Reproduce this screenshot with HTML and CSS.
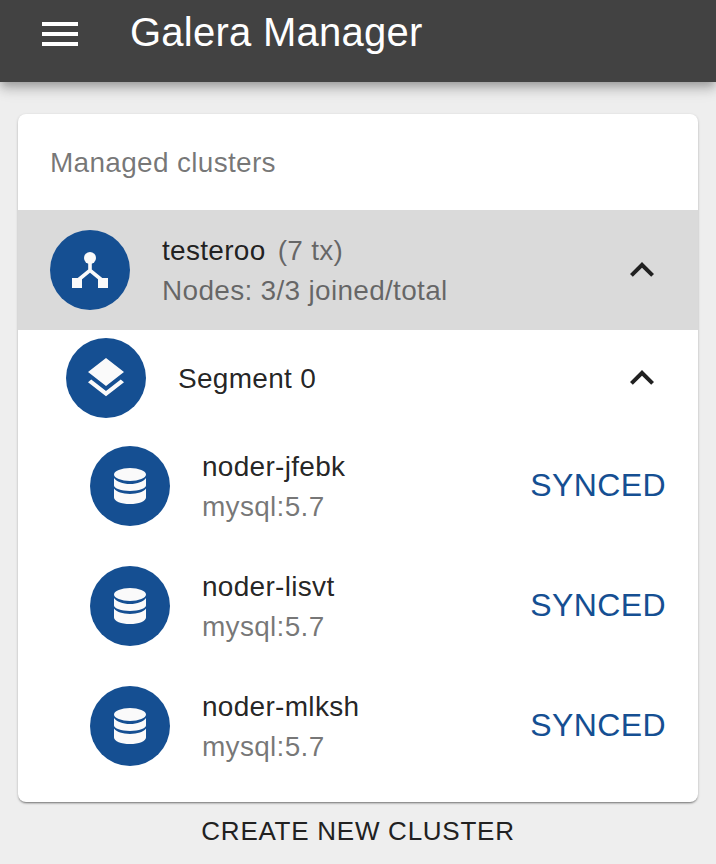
FILE: index.html
```html
<!DOCTYPE html>
<html lang="en">
<head>
<meta charset="utf-8">
<title>Galera Manager</title>
<link rel="stylesheet" href="styles.css">
</head>
<body>
<header class="appbar">
  <svg class="menu-icon" viewBox="0 0 36 24" aria-hidden="true"><path d="M0 0h36v4H0zM0 10h36v4H0zM0 20h36v4H0z"/></svg>
  <h1 class="title">Galera Manager</h1>
</header>
<main class="content">
  <section class="card">
    <div class="subheader">Managed clusters</div>
    <div class="row cluster">
      <span class="avatar">
        <svg class="icon" viewBox="0 0 24 24" aria-hidden="true"><circle cx="12" cy="6" r="3"/><path d="M3 16h5v5H3zM16 16h5v5h-5z"/><path class="line" d="M12 8v4.200M5.500 17.500l6.500-5.300 6.500 5.300"/></svg>
      </span>
      <div class="text">
        <div class="primary">testeroo <span class="tx">(7 tx)</span></div>
        <div class="secondary">Nodes: 3/3 joined/total</div>
      </div>
      <svg class="chevron" viewBox="0 0 24 24" aria-hidden="true"><path d="M12 8l-6 6 1.41 1.41L12 10.83l4.59 4.58L18 14z"/></svg>
    </div>
    <div class="row segment">
      <span class="avatar">
        <svg class="icon" viewBox="0 0 24 24" aria-hidden="true"><path d="M11.99 18.54l-7.37-5.73L3 14.07l9 7 9-7-1.63-1.27-7.38 5.74zM12 16l7.36-5.73L21 9l-9-7-9 7 1.63 1.27L12 16z"/></svg>
      </span>
      <div class="text"><div class="primary">Segment 0</div></div>
      <svg class="chevron" viewBox="0 0 24 24" aria-hidden="true"><path d="M12 8l-6 6 1.41 1.41L12 10.83l4.59 4.58L18 14z"/></svg>
    </div>
    <div class="row node">
      <span class="avatar">
        <svg class="icon" viewBox="0 0 24 24" aria-hidden="true"><use href="#db"/></svg>
      </span>
      <div class="text">
        <div class="primary">noder-jfebk</div>
        <div class="secondary">mysql:5.7</div>
      </div>
      <span class="status">SYNCED</span>
    </div>
    <div class="row node">
      <span class="avatar">
        <svg class="icon" viewBox="0 0 24 24" aria-hidden="true"><use href="#db"/></svg>
      </span>
      <div class="text">
        <div class="primary">noder-lisvt</div>
        <div class="secondary">mysql:5.7</div>
      </div>
      <span class="status">SYNCED</span>
    </div>
    <div class="row node">
      <span class="avatar">
        <svg class="icon" viewBox="0 0 24 24" aria-hidden="true"><use href="#db"/></svg>
      </span>
      <div class="text">
        <div class="primary">noder-mlksh</div>
        <div class="secondary">mysql:5.7</div>
      </div>
      <span class="status">SYNCED</span>
    </div>
  </section>
  <button class="create" type="button">CREATE NEW CLUSTER</button>
</main>
<svg class="defs" aria-hidden="true"><defs>
  <g id="db">
    <ellipse cx="12" cy="6.25" rx="8" ry="3.25"/>
    <path d="M4 8v3.800c0 1.500 3.600 2.700 8 2.700s8-1.200 8-2.700V8c-1.200 1.800-4.300 3-8 3s-6.800-1.200-8-3z"/>
    <path d="M4 13.300v4.400c0 1.800 3.600 3.300 8 3.300s8-1.500 8-3.300v-4.400c-1.200 1.700-4.300 2.700-8 2.700s-6.800-1-8-2.700z"/>
  </g>
</defs></svg>
</body>
</html>
```
FILE: styles.css
```css
* { box-sizing: border-box; }
html, body { margin: 0; height: 100%; }
body {
  background: #eeeeee;
  font-family: "Liberation Sans", Arial, sans-serif;
  color: #212121;
  overflow: hidden;
}
.appbar {
  height: 82px;
  background: #424242;
  display: flex;
  align-items: flex-start;
  padding-left: 42px;
  box-shadow: 0 4px 8px -2px rgba(0,0,0,.2), 0 8px 10px 0 rgba(0,0,0,.14), 0 2px 20px 0 rgba(0,0,0,.12);
}
.menu-icon { width: 36px; height: 24px; margin-top: 22px; fill: #fff; flex: none; }
.title {
  margin: 0 0 0 52px;
  font-size: 40px;
  font-weight: 400;
  line-height: 64px;
  color: #fff;
  letter-spacing: .25px;
}
.content { padding: 32px 18px 0; }
.card {
  background: #fff;
  border-radius: 8px;
  padding-bottom: 16px;
  box-shadow: 0 2px 2px -1px rgba(0,0,0,.4), 0 1px 3px 0 rgba(0,0,0,.2);
}
.subheader {
  height: 96px;
  padding: 1px 0 0 32px;
  font-size: 28px;
  line-height: 96px;
  letter-spacing: .3px;
  color: rgba(0,0,0,.54);
}
.row { display: flex; align-items: center; height: 120px; padding-right: 32px; }
.cluster { background: #dadada; padding-left: 32px; }
.segment { height: 96px; padding-left: 48px; }
.node { padding-left: 72px; }
.avatar {
  width: 80px;
  height: 80px;
  border-radius: 50%;
  background: #154f92;
  display: flex;
  align-items: center;
  justify-content: center;
  flex: none;
  margin-right: 32px;
}
.icon { width: 48px; height: 48px; fill: #fafafa; }
.line { fill: none; stroke: #fafafa; stroke-width: 1.8; }
.text { flex: 1; font-size: 28px; line-height: 40px; letter-spacing: .3px; padding-top: 2px; }
.primary { color: rgba(0,0,0,.87); }
.secondary, .tx { color: rgba(0,0,0,.54); }
.tx { margin-left: 4px; }
.chevron { width: 48px; height: 48px; fill: #212121; flex: none; }
.status { font-size: 32px; color: #154f92; letter-spacing: .4px; margin-top: -2px; }
.create {
  display: block;
  margin: 3px auto 0;
  height: 52px;
  padding: 0;
  border: 0;
  background: none;
  font-family: inherit;
  font-size: 26px;
  letter-spacing: .74px;
  color: #212121;
}
.defs { position: absolute; width: 0; height: 0; }
```
